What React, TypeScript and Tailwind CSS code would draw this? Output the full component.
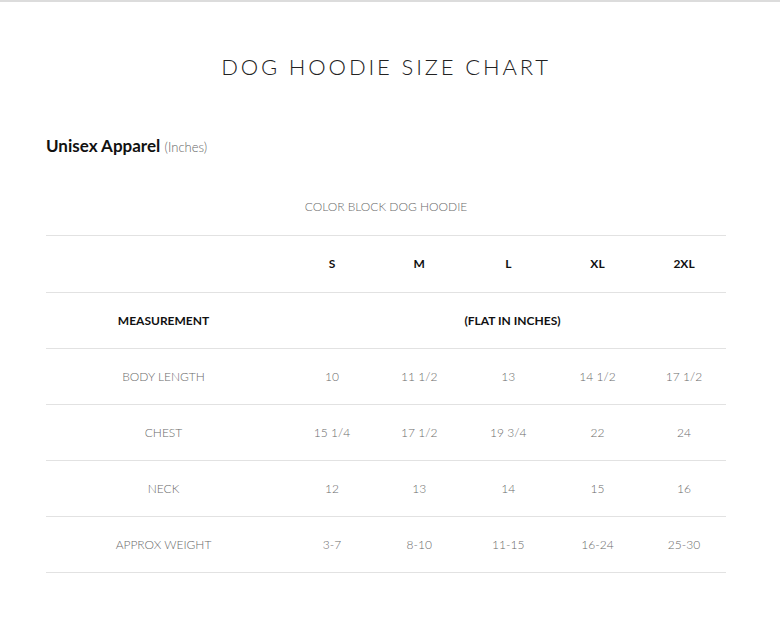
const SIZES = ["S", "M", "L", "XL", "2XL"]

const ROWS: { label: string; values: string[] }[] = [
  { label: "BODY LENGTH", values: ["10", "11 1/2", "13", "14 1/2", "17 1/2"] },
  { label: "CHEST", values: ["15 1/4", "17 1/2", "19 3/4", "22", "24"] },
  { label: "NECK", values: ["12", "13", "14", "15", "16"] },
  { label: "APPROX WEIGHT", values: ["3-7", "8-10", "11-15", "16-24", "25-30"] },
]

// column widths tuned so each size sits under its header like the original table
const GRID = "grid grid-cols-[243px_86px_88.5px_89.5px_89px_84px]"

function Row({ children, tall }: { children: React.ReactNode; tall?: boolean }) {
  return (
    <div
      className={`${GRID} ${tall ? "h-[57px]" : "h-[56px]"} items-center border-b border-[#e2e2e2]`}
    >
      {children}
    </div>
  )
}

export default function App() {
  return (
    <div
      className="h-[630px] w-[780px] border-t-2 border-[#dcdcdc] bg-white text-[#111]"
      style={{ fontFamily: "Lato, 'Open Sans', sans-serif" }}
    >
      <h1 className="pr-[8px] pt-[52px] text-center text-[22px] font-light leading-[26px] tracking-[0.13em] text-[#222]">
        DOG HOODIE SIZE CHART
      </h1>

      <div className="ml-[46px] mt-[56px] w-[680px]">
        <p className="text-[17px] leading-[20px]">
          <span className="font-bold">Unisex Apparel</span>{" "}
          <span className="text-[13px] font-light text-[#666]">(Inches)</span>
        </p>

        <p className="mt-[42px] text-center text-[12px] font-light leading-[16px] text-[#6a6a6a]">
          COLOR BLOCK DOG HOODIE
        </p>

        <div className="mt-[20px] border-t border-[#e2e2e2]">
          <Row tall>
            <div />
            {SIZES.map((s) => (
              <div key={s} className="text-center text-[12px] font-bold">
                {s}
              </div>
            ))}
          </Row>
          <Row>
            <div className="pr-[8px] text-center text-[12px] font-bold">MEASUREMENT</div>
            <div className="col-span-5 pl-[10px] text-center text-[12px] font-bold">
              (FLAT IN INCHES)
            </div>
          </Row>
          {ROWS.map((r) => (
            <Row key={r.label}>
              <div className="pr-[8px] text-center text-[12px] font-light text-[#6a6a6a]">
                {r.label}
              </div>
              {r.values.map((v, i) => (
                <div key={i} className="text-center text-[12px] font-light text-[#6a6a6a]">
                  {v}
                </div>
              ))}
            </Row>
          ))}
        </div>
      </div>
    </div>
  )
}
